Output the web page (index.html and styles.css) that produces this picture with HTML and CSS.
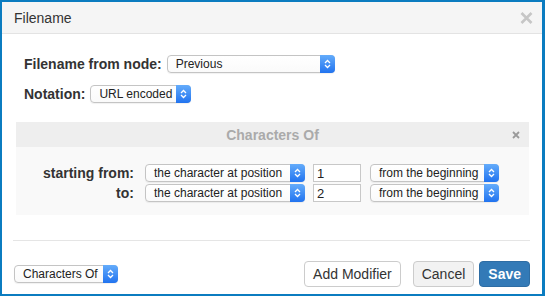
FILE: index.html
```html
<!DOCTYPE html>
<html lang="en">
<head>
    <meta charset="UTF-8">
    <title>Filename</title>
    <link rel="stylesheet" href="styles.css">
</head>
<body>
<div class="dialog">
    <div class="dialog-header">
        <span class="dialog-title">Filename</span>
        <span class="close">
            <svg width="13" height="12" viewBox="0 0 13 12"><path d="M1.5 1 L11.5 11 M11.5 1 L1.5 11" stroke="#c6c6c6" stroke-width="2.6" fill="none"/></svg>
        </span>
    </div>
    <div class="dialog-body">
        <div class="form">
            <div class="form-row">
                <label>Filename from node:</label>
                <div class="select w-node"><span class="select-text">Previous</span><span class="arrow"></span></div>
            </div>
            <div class="form-row">
                <label>Notation:</label>
                <div class="select w-notation"><span class="select-text">URL encoded</span><span class="arrow"></span></div>
            </div>
        </div>

        <div class="panel">
            <div class="panel-heading">
                <span class="panel-title">Characters Of</span>
                <span class="panel-close">
                    <svg width="8" height="8" viewBox="0 0 8 8"><path d="M1 1 L7 7 M7 1 L1 7" stroke="#9a9a9a" stroke-width="1.8" fill="none"/></svg>
                </span>
            </div>
            <div class="panel-body">
                <label>starting from:</label>
                <div class="select"><span class="select-text">the character at position</span><span class="arrow"></span></div>
                <input class="num" type="text" value="1">
                <div class="select"><span class="select-text">from the beginning</span><span class="arrow"></span></div>

                <label>to:</label>
                <div class="select"><span class="select-text">the character at position</span><span class="arrow"></span></div>
                <input class="num" type="text" value="2">
                <div class="select"><span class="select-text">from the beginning</span><span class="arrow"></span></div>
            </div>
        </div>

        <div class="divider"></div>

        <div class="footer">
            <div class="select w-modifier"><span class="select-text">Characters Of</span><span class="arrow"></span></div>
            <div class="buttons">
                <button class="btn btn-add">Add Modifier</button>
                <button class="btn btn-cancel">Cancel</button>
                <button class="btn btn-primary">Save</button>
            </div>
        </div>
    </div>
</div>
</body>
</html>
```

FILE: styles.css
```css
body {
    margin: 0;
    background: #fff;
    font-family: "Liberation Sans", Arial, sans-serif;
    color: #333;
}

.dialog {
    width: 545px;
    height: 296px;
    box-sizing: border-box;
    border: 2px solid #0b7cc0;
    border-right-width: 3px;
    display: flex;
    flex-direction: column;
    overflow: hidden;
}

.dialog-header {
    height: 31px;
    background: #f5f5f5;
    border-bottom: 1px solid #e3e3e3;
    display: flex;
    align-items: center;
    justify-content: space-between;
    padding: 0 9px 0 12px;
}

.dialog-title {
    font-size: 14px;
    color: #333;
    padding-top: 1px;
}

.close {
    display: flex;
    height: 12px;
    margin-top: 1px;
}

.dialog-body {
    padding: 21px 12px 0 11px;
}

/* top form */
.form-row {
    display: flex;
    align-items: center;
    padding-left: 11px;
    margin-bottom: 12px;
}

.form-row label {
    font-size: 14px;
    font-weight: bold;
    color: #333;
    margin-right: 5px;
}

/* mac style select */
.select {
    height: 18px;
    box-sizing: border-box;
    display: flex;
    align-items: stretch;
    background: linear-gradient(#fff, #fafafa);
    border: 1px solid #c4c4c4;
    border-radius: 4px;
    box-shadow: 0 1px 1px rgba(0, 0, 0, 0.06);
    font-size: 12px;
    color: #222;
}

.select-text {
    flex: 1;
    padding-left: 8px;
    line-height: 16px;
    white-space: nowrap;
    overflow: hidden;
}

.arrow {
    width: 15px;
    margin: -1px -1px -1px 0;
    border-radius: 0 4px 4px 0;
    background-image:
        url("data:image/svg+xml,%3Csvg xmlns='http://www.w3.org/2000/svg' width='7' height='10' viewBox='0 0 7 10'%3E%3Cpath d='M1 4 L3.5 1.5 L6 4 M1 6 L3.5 8.5 L6 6' stroke='white' stroke-width='1.3' fill='none'/%3E%3C/svg%3E"),
        linear-gradient(#64acfb, #2173ef);
    background-repeat: no-repeat;
    background-position: center, 0 0;
}

.w-node { width: 168px; }
.w-notation { width: 101px; }
.w-modifier { width: 104px; }

/* modifier panel */
.panel {
    margin: 19px 1px 0 3px;
    background: #f9f9f9;
}

.panel-heading {
    height: 25px;
    background: #eeeeee;
    display: flex;
    align-items: center;
    justify-content: center;
    position: relative;
}

.panel-title {
    font-size: 14px;
    font-weight: bold;
    color: #aaa;
}

.panel-close {
    position: absolute;
    right: 9px;
    top: 9px;
    display: flex;
}

.panel-body {
    display: grid;
    grid-template-columns: 121px 160px 48px 130px;
    column-gap: 8px;
    row-gap: 2px;
    align-items: center;
    padding: 17px 0 13px 0;
}

.panel-body label {
    font-size: 14px;
    font-weight: bold;
    color: #333;
    text-align: right;
    margin-right: 3px;
}

.panel-body .num + .select {
    margin-left: 1px;
}

.num {
    height: 18px;
    box-sizing: border-box;
    border: 1px solid #c8c8c8;
    padding: 0 3px;
    font-family: "Liberation Sans", Arial, sans-serif;
    font-size: 13px;
    color: #222;
    background: #fff;
    margin: 0;
    outline: none;
}

.divider {
    height: 1px;
    background: #e5e5e5;
    margin-top: 25px;
}

.footer {
    display: flex;
    justify-content: space-between;
    align-items: center;
    margin-top: 20px;
    padding-left: 1px;
}

.buttons {
    display: flex;
    gap: 5px;
}

.btn {
    height: 26px;
    box-sizing: border-box;
    border: 1px solid #ccc;
    border-radius: 4px;
    font-family: "Liberation Sans", Arial, sans-serif;
    font-size: 14px;
    color: #333;
    background: #fff;
    padding: 0 8px;
    margin: 0;
}

.btn-add {
    margin-right: 7px;
}

.btn-cancel {
    background: #f2f2f2;
}

.btn-primary {
    background: #337ab7;
    border-color: #2e6da4;
    color: #fff;
    font-weight: bold;
}
```
